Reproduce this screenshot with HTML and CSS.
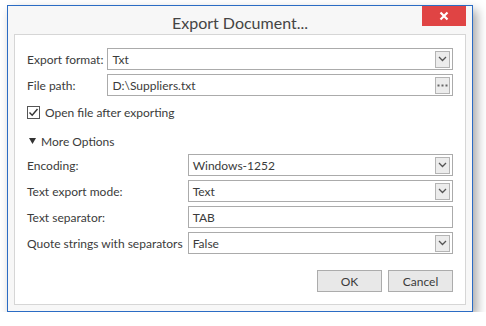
FILE: index.html
```html
<!DOCTYPE html>
<html lang="en">
<head>
    <meta charset="UTF-8">
    <title>Export Document...</title>
    <link rel="stylesheet" href="styles.css">
</head>
<body>
    <div class="window">
        <div class="titlebar">
            <span class="title">Export Document...</span>
            <button class="close-btn">
                <svg width="10" height="10" viewBox="0 0 10 10"><path d="M1.5 1.5 L8.5 8.5 M8.5 1.5 L1.5 8.5" stroke="#fff" stroke-width="2.2"/></svg>
            </button>
        </div>

        <div class="panel">
            <div class="form-grid">
                <label class="form-label">Export format:</label>
                <div class="field">
                    <span class="field-text">Txt</span>
                    <span class="field-btn">
                        <svg width="9" height="6" viewBox="0 0 9 6"><path d="M1 1 L4.5 4.5 L8 1" fill="none" stroke="#555" stroke-width="1.3"/></svg>
                    </span>
                </div>
                <label class="form-label">File path:</label>
                <div class="field">
                    <span class="field-text">D:\Suppliers.txt</span>
                    <span class="field-btn">
                        <svg width="11" height="3" viewBox="0 0 11 3"><rect x="0.5" y="0.5" width="2" height="2" fill="#666"/><rect x="4.5" y="0.5" width="2" height="2" fill="#666"/><rect x="8.5" y="0.5" width="2" height="2" fill="#666"/></svg>
                    </span>
                </div>
            </div>

            <div class="check-row">
                <span class="checkbox">
                    <svg width="11" height="11" viewBox="0 0 11 11"><path d="M1.5 5.5 L4.2 8.3 L9.5 2" fill="none" stroke="#333" stroke-width="1.4"/></svg>
                </span>
                <span>Open file after exporting</span>
            </div>

            <div class="expander">
                <svg class="arrow" width="7" height="6" viewBox="0 0 7 6"><path d="M0 0 H7 L3.5 6 Z" fill="#333"/></svg>
                <span>More Options</span>
            </div>

            <div class="form-grid options">
                <label class="form-label">Encoding:</label>
                <div class="field">
                    <span class="field-text">Windows-1252</span>
                    <span class="field-btn">
                        <svg width="9" height="6" viewBox="0 0 9 6"><path d="M1 1 L4.5 4.5 L8 1" fill="none" stroke="#555" stroke-width="1.3"/></svg>
                    </span>
                </div>
                <label class="form-label">Text export mode:</label>
                <div class="field">
                    <span class="field-text">Text</span>
                    <span class="field-btn">
                        <svg width="9" height="6" viewBox="0 0 9 6"><path d="M1 1 L4.5 4.5 L8 1" fill="none" stroke="#555" stroke-width="1.3"/></svg>
                    </span>
                </div>
                <label class="form-label">Text separator:</label>
                <div class="field">
                    <span class="field-text">TAB</span>
                </div>
                <label class="form-label">Quote strings with separators</label>
                <div class="field">
                    <span class="field-text">False</span>
                    <span class="field-btn">
                        <svg width="9" height="6" viewBox="0 0 9 6"><path d="M1 1 L4.5 4.5 L8 1" fill="none" stroke="#555" stroke-width="1.3"/></svg>
                    </span>
                </div>
            </div>

            <div class="buttons">
                <button class="btn">OK</button>
                <button class="btn">Cancel</button>
            </div>
        </div>
    </div>
</body>
</html>
```

FILE: styles.css
```css
/* Base */
body {
    margin: 0;
    background: #ffffff;
    font-family: Lato, "Open Sans", sans-serif;
    font-size: 12px;
    color: #3b3b3b;
}

/* Window frame */
.window {
    margin: 5px 0 0 7px;
    width: 452px;
    height: 299px;
    padding: 0 6px 6px 6px;
    border: 1px solid #2b6cc4;
    background: #f7f7f7;
    box-shadow: 4px 5px 10px rgba(0, 0, 0, 0.35);
    display: flex;
    flex-direction: column;
}

.titlebar {
    position: relative;
    height: 28px;
    display: flex;
    justify-content: center;
    align-items: center;
}

.title {
    font-size: 16px;
    color: #444;
    padding-top: 4px;
}

.close-btn {
    position: absolute;
    top: 0;
    right: 0;
    width: 44px;
    height: 20px;
    border: none;
    padding: 0;
    background: #e04444;
    display: flex;
    align-items: center;
    justify-content: center;
}

/* Content panel */
.panel {
    flex: 1;
    background: #ffffff;
    border: 1px solid #d6d6d6;
    padding: 13px 12px 0 12px;
}

.form-grid {
    display: grid;
    grid-template-columns: auto 1fr;
    column-gap: 4px;
    row-gap: 4px;
}

.form-grid.options {
    margin-top: 5px;
    column-gap: 5px;
}

.form-label {
    display: flex;
    align-items: center;
    height: 22px;
    white-space: nowrap;
}

.field {
    height: 20px;
    border: 1px solid #ababab;
    background: #fff;
    display: flex;
    align-items: center;
    justify-content: space-between;
    padding: 0 2px 0 4px;
}

.field-btn {
    width: 13px;
    height: 15px;
    border: 1px solid #b4b4b4;
    background: #ececec;
    display: flex;
    align-items: center;
    justify-content: center;
}

/* Checkbox */
.check-row {
    margin-top: 8px;
    height: 16px;
    display: flex;
    align-items: center;
    gap: 5px;
}

.checkbox {
    width: 11px;
    height: 11px;
    border: 1px solid #555;
    display: flex;
    align-items: center;
    justify-content: center;
}

/* Expander */
.expander {
    margin-top: 13px;
    height: 16px;
    display: flex;
    align-items: center;
    gap: 5px;
    padding-left: 2px;
}

/* Buttons */
.buttons {
    margin-top: 16px;
    display: flex;
    justify-content: flex-end;
    gap: 6px;
}

.btn {
    width: 65px;
    height: 22px;
    border: 1px solid #acacac;
    background: #e8e8e8;
    font-family: inherit;
    font-size: 12px;
    color: #3b3b3b;
    padding: 0;
}
```
